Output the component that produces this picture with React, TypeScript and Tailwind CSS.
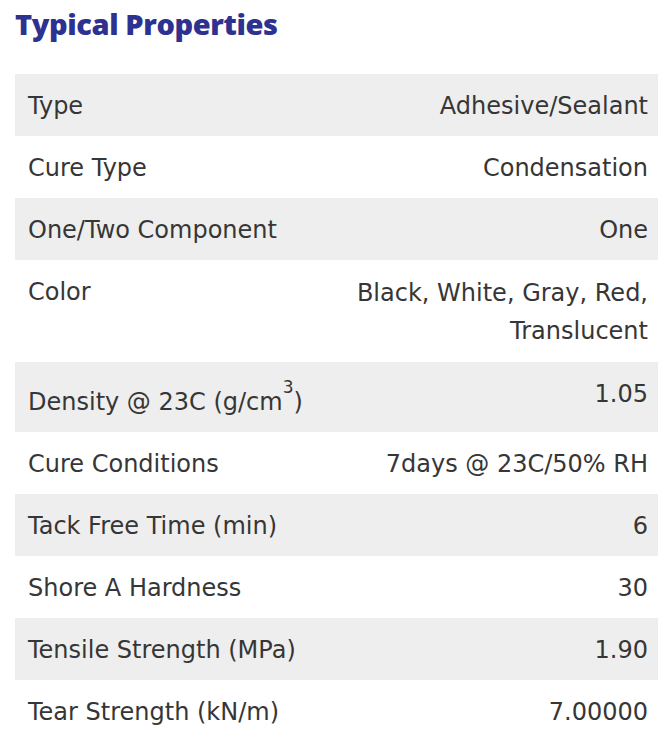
import React from "react";

type Row = {
  label: React.ReactNode;
  value: React.ReactNode;
  labelPad?: string;
  valueLead?: string;
};

const rows: Row[] = [
  { label: "Type", value: "Adhesive/Sealant" },
  { label: "Cure Type", value: "Condensation" },
  { label: "One/Two Component", value: "One" },
  { label: "Color", value: "Black, White, Gray, Red, Translucent", valueLead: "leading-[38px]" },
  {
    label: (
      <>
        Density @ 23C (g/cm<sup className="text-[17px] align-[9px] leading-none">3</sup>)
      </>
    ),
    value: "1.05",
    labelPad: "pt-[22px]",
  },
  { label: "Cure Conditions", value: "7days @ 23C/50% RH" },
  { label: "Tack Free Time (min)", value: "6" },
  { label: "Shore A Hardness", value: "30" },
  { label: "Tensile Strength (MPa)", value: "1.90" },
  { label: "Tear Strength (kN/m)", value: "7.00000" },
];

export default function App() {
  return (
    <div className="w-[659px] min-h-[735px] bg-white pl-[15px] pr-[1px]">
      <h2 className="pt-[4px] h-[74px] text-[29px] font-extrabold text-[#2e3190] tracking-[-0.4px] leading-[40px] [font-family:'Open_Sans',sans-serif]">
        Typical Properties
      </h2>
      <table className="w-full border-collapse text-[24px] text-[#363636] [font-family:'DejaVu_Sans',sans-serif]">
        <tbody>
          {rows.map((r, i) => (
            <tr key={i} className={i % 2 === 0 ? "bg-[#eeeeee]" : "bg-white"}>
              <td className={`w-1/2 align-top pl-[13px] pb-[12px] leading-[36px] ${r.labelPad ?? "pt-[14px]"}`}>
                {r.label}
              </td>
              <td className={`w-1/2 align-top pr-[10px] pt-[14px] pb-[12px] text-right ${r.valueLead ?? "leading-[36px]"}`}>
                {r.value}
              </td>
            </tr>
          ))}
        </tbody>
      </table>
    </div>
  );
}
